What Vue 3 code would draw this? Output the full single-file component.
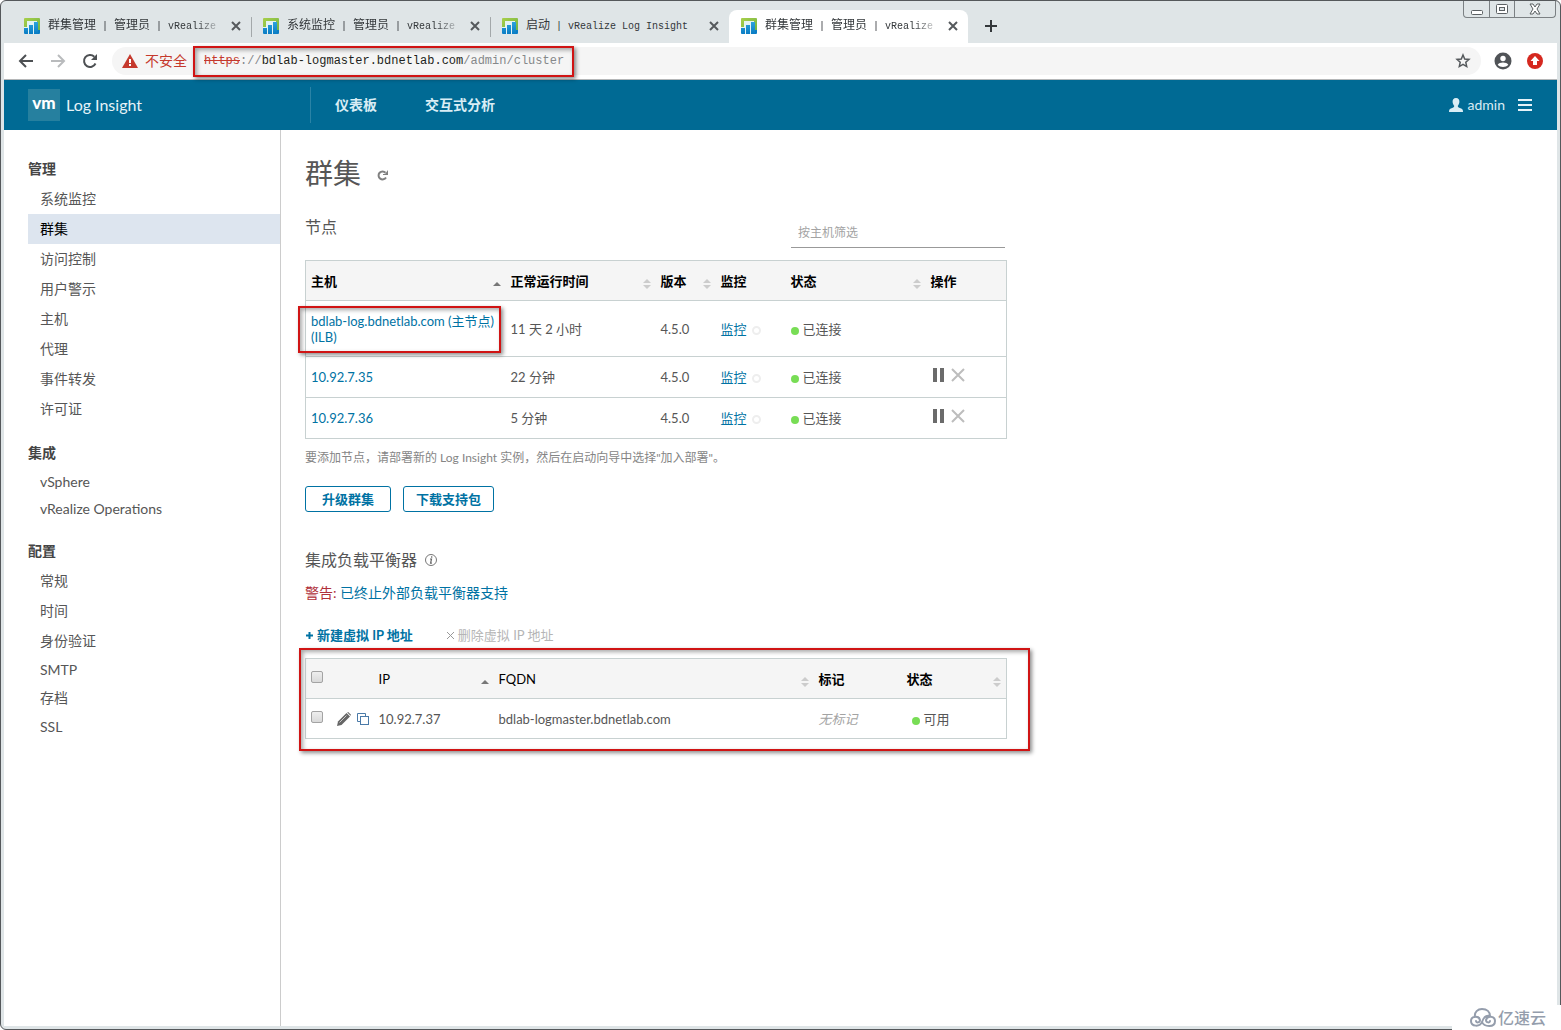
<script setup>
import { ref } from 'vue'

const tabs = [
  { parts: ['群集管理', '管理员'], product: 'vRealize' },
  { parts: ['系统监控', '管理员'], product: 'vRealize' },
  { parts: ['启动'], product: 'vRealize Log Insight', full: true },
  { parts: ['群集管理', '管理员'], product: 'vRealize', active: true }
]

const menu = [
  { title: '管理', items: ['系统监控', '群集', '访问控制', '用户警示', '主机', '代理', '事件转发', '许可证'] },
  { title: '集成', items: ['vSphere', 'vRealize Operations'] },
  { title: '配置', items: ['常规', '时间', '身份验证', 'SMTP', '存档', 'SSL'] }
]
const current = '群集'
const isLatin = (s) => /^[A-Za-z ]+$/.test(s)

const nodes = [
  { host: 'bdlab-log.bdnetlab.com (主节点) (ILB)', uptime: '11 天 2 小时', version: '4.5.0', master: true },
  { host: '10.92.7.35', uptime: '22 分钟', version: '4.5.0' },
  { host: '10.92.7.36', uptime: '5 分钟', version: '4.5.0' }
]

const filter = ref('')
</script>

<template>
  <div class="window">
    <div class="tabstrip">
      <div v-for="(t, i) in tabs" :key="i" class="tab" :class="{ active: t.active }">
        <svg class="favicon" width="16" height="16" viewBox="0 0 16 16" aria-hidden="true">
          <defs>
            <linearGradient id="leaf" x1="0" y1="0" x2="1" y2="1"><stop offset="0" stop-color="#a9cf4a" /><stop offset="1" stop-color="#6fb344" /></linearGradient>
            <linearGradient id="bar" x1="0" y1="0" x2="0" y2="1"><stop offset="0" stop-color="#2ba3dc" /><stop offset="1" stop-color="#0a7cc4" /></linearGradient>
          </defs>
          <path d="M1 0h14q1 0 1 1v12H0V1q0-1 1-1z" fill="url(#leaf)" />
          <path d="M3 3h10v13H0V9h3z" fill="#e3f3f4" />
          <path d="M0 10h4v6H1q-1 0-1-1zM5 7h4v9H5zM10 4h4v12h-4z" fill="url(#bar)" />
          <path d="M14 12h2v3q0 1-1 1h-1z" fill="#0a7cc4" />
        </svg>
        <span class="tab-title" :class="{ fade: !t.full }">
          <template v-for="p in t.parts" :key="p">{{ p }}<span class="mono"> | </span></template><span class="mono">{{ t.product }}</span>
        </span>
        <button class="plain tab-close" aria-label="关闭标签页">
          <svg width="10" height="10" viewBox="0 0 10 10"><path d="M1 1l8 8M9 1l-8 8" stroke="#55595c" stroke-width="2" /></svg>
        </button>
      </div>
      <button class="plain new-tab" aria-label="新标签页">
        <svg width="12" height="12" viewBox="0 0 12 12"><path d="M6 0v12M0 6h12" stroke="#33373a" stroke-width="2" /></svg>
      </button>
      <div class="win-controls">
        <button class="plain" aria-label="最小化">
          <svg width="14" height="12" viewBox="0 0 14 12"><rect x="1.500" y="7.500" width="11" height="4" rx="1" fill="#fff" stroke="#5b6063" /></svg>
        </button>
        <button class="plain" aria-label="最大化">
          <svg width="14" height="12" viewBox="0 0 14 12"><rect x="1.500" y="1.500" width="11" height="9" rx="1" fill="#fff" stroke="#5b6063" /><rect x="4.500" y="4.500" width="5" height="3" fill="#dfe5e7" stroke="#5b6063" /></svg>
        </button>
        <button class="plain wide" aria-label="关闭">
          <svg width="14" height="12" viewBox="0 0 14 12"><path d="M2 1h3l2 3 2-3h3L9 6l3 5H9L7 8l-2 3H2l3-5z" fill="#fff" stroke="#5b6063" /></svg>
        </button>
      </div>
    </div>

    <div class="toolbar">
      <button class="plain tool" aria-label="后退">
        <svg width="16" height="16" viewBox="0 0 16 16"><path d="M15 8H2M8 2L2 8l6 6" fill="none" stroke="#4d5053" stroke-width="2" /></svg>
      </button>
      <button class="plain tool" aria-label="前进">
        <svg width="16" height="16" viewBox="0 0 16 16"><path d="M1 8h13M8 2l6 6-6 6" fill="none" stroke="#b9bbbd" stroke-width="2" /></svg>
      </button>
      <button class="plain tool" aria-label="重新加载">
        <svg width="16" height="16" viewBox="0 0 16 16"><path d="M13.500 10.500A6 6 0 1 1 12.300 3.700" fill="none" stroke="#4d5053" stroke-width="2" /><path d="M15 1v6H9z" fill="#4d5053" /></svg>
      </button>
      <div class="omnibox">
        <svg width="16" height="14" viewBox="0 0 16 14" aria-hidden="true"><path d="M8 0l8 14H0z" fill="#c5392d" /><path d="M7 5h2v4H7zM7 10h2v2H7z" fill="#fff" /></svg>
        <span class="insecure">不安全</span>
        <span class="url"><s>https</s><span>://</span><b>bdlab-logmaster.bdnetlab.com</b><span>/admin/cluster</span><i class="mark mark-url"></i></span>
        <button class="plain star" aria-label="收藏">
          <svg width="16" height="16" viewBox="0 0 16 16"><path d="M8 2l1.700 4 4.300.4-3.200 2.900.9 4.300L8 11.400l-3.700 2.200.9-4.300L2 6.400 6.300 6z" fill="none" stroke="#55595c" stroke-width="1.500" /></svg>
        </button>
      </div>
      <button class="plain round" aria-label="用户">
        <svg width="18" height="18" viewBox="0 0 18 18"><circle cx="9" cy="9" r="8.500" fill="#505357" /><circle cx="9" cy="6.500" r="2.700" fill="#fff" /><path d="M3.700 12.700c1.500-3 9.100-3 10.600 0-2.500 3-8.100 3-10.600 0z" fill="#fff" /></svg>
      </button>
      <button class="plain round" aria-label="更新">
        <svg width="16" height="16" viewBox="0 0 16 16"><circle cx="8" cy="8" r="8" fill="#d5281f" /><path d="M8 3l4.500 5H10v4H6V8H3.500z" fill="#fff" /></svg>
      </button>
    </div>

    <header class="appbar">
      <span class="vm">vm</span>
      <span class="product">Log Insight</span>
      <nav class="topnav">
        <a href="#">仪表板</a>
        <a href="#">交互式分析</a>
      </nav>
      <a href="#" class="user">
        <svg width="14" height="14" viewBox="0 0 14 14" aria-hidden="true"><path d="M7 0c2.500 0 3.600 1.700 3.400 4C10.200 6 9.400 7 8.800 7.800c0 1.500.6 1.700 2.700 2.400C13.500 11 14 11.700 14 14H0c0-2.300.5-3 2.500-3.800 2.100-.7 2.700-.9 2.700-2.400C4.600 7 3.800 6 3.600 4 3.400 1.700 4.500 0 7 0z" fill="#d9edf5" /></svg>
        admin
      </a>
      <button class="plain burger" aria-label="菜单">
        <svg width="14" height="12" viewBox="0 0 14 12"><path d="M0 1h14M0 6h14M0 11h14" stroke="#e6f3f8" stroke-width="2" /></svg>
      </button>
    </header>

    <div class="body">
      <nav class="sidebar">
        <section v-for="g in menu" :key="g.title">
          <h3>{{ g.title }}</h3>
          <a v-for="m in g.items" :key="m" href="#" :class="{ latin: isLatin(m), current: m === current }">{{ m }}</a>
        </section>
      </nav>

      <main class="main">
        <div class="title">
          <h1>群集</h1>
          <button class="plain" aria-label="刷新">
            <svg width="12" height="12" viewBox="0 0 12 12"><path d="M9 8.500A4 4 0 1 1 8.500 3.700" fill="none" stroke="#808080" stroke-width="2" /><path d="M11 1v5H6V5h2z" fill="#808080" /></svg>
          </button>
        </div>

        <div class="section-head">
          <h2>节点</h2>
          <input v-model="filter" type="text" placeholder="按主机筛选" aria-label="按主机筛选" />
        </div>

        <table class="nodes">
          <colgroup><col class="w200" /><col class="w150" /><col class="w60" /><col class="w70" /><col class="w140" /><col /></colgroup>
          <thead>
            <tr>
              <th>主机<i class="sort asc"></i></th>
              <th>正常运行时间<i class="sort"></i></th>
              <th>版本<i class="sort"></i></th>
              <th>监控</th>
              <th>状态<i class="sort"></i></th>
              <th>操作</th>
            </tr>
          </thead>
          <tbody>
            <tr v-for="n in nodes" :key="n.host" :class="{ tall: n.master }">
              <td><a href="#">{{ n.host }}</a><i v-if="n.master" class="mark mark-host"></i></td>
              <td>{{ n.uptime }}</td>
              <td>{{ n.version }}</td>
              <td><a href="#">监控</a><i class="ring"></i></td>
              <td><i class="dot"></i>已连接</td>
              <td>
                <span v-if="!n.master" class="actions">
                  <button class="plain" aria-label="暂停"><svg width="12" height="14" viewBox="0 0 12 14"><path d="M0 0h4v14H0zM7 0h4v14H7z" fill="#6b6b6b" /></svg></button>
                  <button class="plain" aria-label="移除"><svg width="14" height="14" viewBox="0 0 14 14"><path d="M1 1l12 12M13 1L1 13" stroke="#bdbdbd" stroke-width="2" /></svg></button>
                </span>
              </td>
            </tr>
          </tbody>
        </table>

        <p class="note">要添加节点，请部署新的 Log Insight 实例，然后在启动向导中选择"加入部署"。</p>

        <div class="buttons">
          <button class="outline">升级群集</button>
          <button class="outline">下载支持包</button>
        </div>

        <div class="ilb-head">
          <h2>集成负载平衡器</h2>
          <svg width="12" height="12" viewBox="0 0 12 12" role="img" aria-label="信息"><circle cx="6" cy="6" r="5.500" fill="none" stroke="#777" /><path d="M6.700 2.300v1.400M5 5h1.500l-.9 4.200h1.300" fill="none" stroke="#666" stroke-width="1.200" /></svg>
        </div>
        <p class="warning"><span>警告:</span> <a href="#">已终止外部负载平衡器支持</a></p>

        <div class="vip-actions">
          <button class="plain add"><svg width="7" height="7" viewBox="0 0 7 7" aria-hidden="true"><path d="M3.500 0v7M0 3.500h7" stroke="#0072a3" stroke-width="2" /></svg>新建虚拟 IP 地址</button>
          <button class="plain del" disabled><svg width="7" height="7" viewBox="0 0 7 7" aria-hidden="true"><path d="M0 0l7 7M7 0L0 7" stroke="#999" stroke-width="1" /></svg>删除虚拟 IP 地址</button>
        </div>

        <div class="vip-wrap">
          <table>
            <colgroup><col class="w26" /><col class="w42" /><col class="w120" /><col class="w320" /><col class="w88" /><col /></colgroup>
            <thead>
              <tr>
                <th><input type="checkbox" aria-label="全选" /></th>
                <th></th>
                <th class="light">IP<i class="sort asc"></i></th>
                <th class="light">FQDN<i class="sort"></i></th>
                <th>标记</th>
                <th>状态<i class="sort"></i></th>
              </tr>
            </thead>
            <tbody>
              <tr>
                <td><input type="checkbox" aria-label="选择 10.92.7.37" /></td>
                <td>
                  <span class="edit">
                    <button class="plain" aria-label="编辑"><svg width="14" height="14" viewBox="0 0 14 14"><path d="M0 14l1-4.500L9.500 1l3.500 3.500L4.500 13z" fill="#666" /><path d="M10.200.5l1-.5 2.800 2.800-.5 1z" fill="#666" /><path d="M2.500 10.500l7-7" stroke="#c8c8c8" /></svg></button>
                    <button class="plain" aria-label="复制"><svg width="12" height="12" viewBox="0 0 12 12"><path d="M8.500 3V.5h-8v8H3" fill="none" stroke="#4a7aa8" /><rect x="3.500" y="3.500" width="8" height="8" fill="#fff" stroke="#4a7aa8" /></svg></button>
                  </span>
                </td>
                <td>10.92.7.37</td>
                <td>bdlab-logmaster.bdnetlab.com</td>
                <td><em>无标记</em></td>
                <td class="vip-state"><i class="dot"></i>可用</td>
              </tr>
            </tbody>
          </table>
          <i class="mark mark-vip"></i>
        </div>
      </main>
    </div>

    <div class="brand">
      <svg width="26" height="20" viewBox="0 0 26 20" aria-hidden="true">
        <path d="M5 9C4 4 8 1 12 1c5 0 8 3 8 7-5-1-7 3-8 6-2 5-11 5-11-1 0-5 8-6 9-1 0 3-4 3-4 1M12 14c2 5 13 6 13-1 0-5-8-6-9-1 0 3 4 3 4 1" fill="none" stroke="#949dac" stroke-width="2" stroke-linecap="round" />
      </svg>
      <span>亿速云</span>
    </div>
  </div>
</template>

<style>
body {
  margin: 0;
  background: #fff;
}
</style>

<style scoped>
* {
  box-sizing: border-box;
}

.window {
  position: relative;
  display: flex;
  flex-direction: column;
  min-height: 100vh;
  padding: 0 3px 3px;
  border: 1px solid #55585b;
  border-radius: 6px;
  background: #dfe5e7;
  color: #565656;
  font: 13px/20px Lato, "Noto Sans CJK SC", sans-serif;
}

a {
  color: #0072a3;
  text-decoration: none;
}

h1,
h2,
h3,
p {
  margin: 0;
  font-weight: 400;
}

.plain {
  display: flex;
  align-items: center;
  justify-content: center;
  padding: 0;
  border: 0;
  background: none;
  font: inherit;
  color: inherit;
}

/* browser chrome */
.tabstrip {
  display: flex;
  height: 42px;
  padding: 9px 0 0 8px;
}

.tab {
  display: flex;
  align-items: center;
  width: 239px;
  height: 33px;
  padding: 0 10px 2px 12px;
  border-radius: 8px 8px 0 0;
  color: #33373a;
  font-size: 12px;
}

.tab.active {
  background: #fff;
}

.tab:not(.active) + .tab:not(.active) {
  background: linear-gradient(#a3a8aa, #a3a8aa) left center / 1px 20px no-repeat;
}

.favicon {
  flex: none;
  margin-right: 8px;
}

.tab-title {
  flex: 1;
  white-space: nowrap;
}

.tab-title.fade {
  -webkit-mask-image: linear-gradient(to right, #000 88%, transparent 104%);
  mask-image: linear-gradient(to right, #000 88%, transparent 104%);
}

.tab-close {
  flex: none;
  width: 10px;
  margin-left: 14px;
}

.mono {
  font-family: "Liberation Mono", monospace;
  font-size: 10px;
  white-space: pre;
}

.new-tab {
  width: 28px;
  height: 31px;
  margin-left: 9px;
}

.win-controls {
  display: flex;
  height: 17px;
  margin: -9px 1px 0 auto;
  border: 1px solid #7b8083;
  border-top: 0;
  border-radius: 0 0 4px 4px;
}

.win-controls button {
  width: 25px;
}

.win-controls button + button {
  border-left: 1px solid #7b8083;
}

.win-controls .wide {
  width: 41px;
}

.toolbar {
  display: flex;
  align-items: center;
  height: 37px;
  padding: 0 12px 0 6px;
  border-bottom: 1px solid #b5b7b8;
  background: #fff;
}

.tool {
  width: 32px;
  height: 28px;
}

.omnibox {
  display: flex;
  flex: 1;
  align-items: center;
  height: 28px;
  margin: 0 12px 0 6px;
  padding: 0 10px;
  border-radius: 14px;
  background: #f5f5f5;
}

.insecure {
  margin: 0 17px 0 7px;
  color: #c5392d;
  font-size: 14px;
}

.url {
  position: relative;
  color: #85888a;
  font: 12px/28px "Liberation Mono", monospace;
}

.url s {
  color: #c5392d;
}

.url b {
  color: #1d1f20;
  font-weight: 400;
}

.star {
  margin-left: auto;
}

.round {
  width: 20px;
}

.round + .round {
  margin-left: 12px;
}

/* red highlight frames lie over the page */
.mark {
  position: absolute;
  border: 2px solid #d01414;
  box-shadow: 2px 2px 4px rgba(0, 0, 0, 0.45), inset 2px 2px 4px rgba(0, 0, 0, 0.35);
  pointer-events: none;
}

.mark-url {
  top: -1px;
  left: -11px;
  width: 381px;
  height: 31px;
}

.mark-host {
  top: 5px;
  left: -8px;
  width: 203px;
  height: 47px;
}

.mark-vip {
  inset: -10px -23px -12px -6px;
}

/* application header */
.appbar {
  display: flex;
  align-items: center;
  height: 50px;
  padding: 0 25px 0 24px;
  background: #006a94;
  color: #d9edf5;
}

.vm {
  width: 32px;
  height: 32px;
  margin-right: 6px;
  background: #26809f;
  color: #fff;
  font: 900 17px/28px Lato, sans-serif;
  text-align: center;
}

.product {
  width: 244px;
  color: #e6f3f8;
  font-size: 16px;
}

.topnav {
  display: flex;
  gap: 48px;
  padding-left: 24px;
  border-left: 1px solid #2a83a6;
  line-height: 36px;
}

.topnav a {
  color: #d9edf5;
  font-size: 14px;
  font-weight: 700;
}

.user {
  display: flex;
  align-items: center;
  gap: 5px;
  margin-left: auto;
  color: #d9edf5;
  font-size: 14px;
}

.burger {
  margin-left: 13px;
}

.body {
  display: flex;
  flex: 1;
  background: #fff;
}

.sidebar {
  flex: none;
  width: 277px;
  padding: 24px 0 24px 24px;
  border-right: 1px solid #ccc;
  font-size: 14px;
}

.sidebar section + section {
  margin-top: 14px;
}

.sidebar h3 {
  color: #454545;
  font-size: 14px;
  font-weight: 700;
  line-height: 30px;
}

.sidebar a {
  display: block;
  padding-left: 12px;
  color: #565656;
  line-height: 30px;
}

.sidebar a.latin {
  line-height: 27px;
}

.sidebar a.current {
  background: #dde5ef;
  color: #000;
}

.main {
  flex: 1;
  min-width: 0;
  max-width: 726px;
  padding: 23px 0 24px 24px;
}

.title {
  display: flex;
  align-items: center;
  gap: 16px;
}

h1 {
  font-size: 28px;
  line-height: 40px;
}

.title button {
  padding-top: 4px;
}

h2 {
  font-size: 16px;
  line-height: 30px;
}

.section-head {
  display: flex;
  justify-content: space-between;
  height: 36px;
  margin-top: 19px;
  padding-right: 2px;
}

.section-head input {
  align-self: flex-end;
  width: 214px;
  height: 32px;
  padding: 2px 7px 0;
  border: 0;
  border-bottom: 1px solid #999;
  background: none;
  font: 12px/20px Lato, "Noto Sans CJK SC", sans-serif;
}

.section-head input::placeholder {
  color: #a3a3a3;
}

table {
  width: 100%;
  border: 1px solid #c8d1d1;
  border-collapse: collapse;
  table-layout: fixed;
}

.nodes {
  margin-top: 12px;
}

.w26 { width: 26px; }
.w42 { width: 42px; }
.w60 { width: 60px; }
.w70 { width: 70px; }
.w88 { width: 88px; }
.w120 { width: 120px; }
.w140 { width: 140px; }
.w150 { width: 150px; }
.w200 { width: 200px; }
.w320 { width: 320px; }

tr {
  height: 41px;
  border-bottom: 1px solid #c8d1d1;
}

thead tr {
  height: 40px;
  background: #f5f5f5;
}

.vip-wrap tr {
  height: 40px;
}

tr.tall {
  height: 56px;
}

th,
td {
  position: relative;
  padding: 0 5px;
  text-align: left;
  line-height: 16px;
}

th {
  color: #000;
  font-weight: 700;
}

th.light {
  font-weight: 400;
}

.sort {
  position: absolute;
  top: 18px;
  right: 5px;
  width: 8px;
  height: 10px;
}

.sort::before,
.sort::after {
  content: "";
  position: absolute;
  left: 0;
  border: 4px solid transparent;
}

.sort::before {
  top: -4px;
  border-bottom-color: #ccc;
}

.sort::after {
  top: 6px;
  border-top-color: #ccc;
}

.sort.asc::before {
  top: -1px;
  border-bottom-color: #777;
}

.sort.asc::after {
  display: none;
}

.ring {
  display: inline-block;
  width: 9px;
  height: 9px;
  margin-left: 5px;
  border: 2px solid #eee;
  border-radius: 50%;
  vertical-align: -1px;
}

.dot {
  display: inline-block;
  width: 8px;
  height: 8px;
  margin-right: 4px;
  border-radius: 50%;
  background: #78dd55;
  vertical-align: -1px;
}

.vip-state {
  padding-left: 10px;
}

.actions,
.edit {
  display: flex;
  align-items: center;
  gap: 6px;
}

.actions {
  padding: 0 0 4px 2px;
}

em {
  color: #a3a3a3;
}

input[type="checkbox"] {
  appearance: none;
  display: block;
  width: 12px;
  height: 12px;
  margin: 0 0 4px;
  border: 1px solid #a3a3a3;
  border-radius: 2px;
  background: linear-gradient(#eee, #d9d9d9);
}

.note {
  margin-top: 9px;
  color: #858585;
  font-size: 12px;
}

.buttons {
  display: flex;
  gap: 12px;
  margin-top: 18px;
}

.outline {
  height: 26px;
  padding: 0 12px;
  border: 1px solid #0072a3;
  border-radius: 3px;
  background: #fff;
  color: #0072a3;
  font: 700 13px/20px Lato, "Noto Sans CJK SC", sans-serif;
}

.outline:first-child {
  padding: 0 16px;
}

.ilb-head {
  display: flex;
  align-items: center;
  gap: 8px;
  margin-top: 33px;
}

.warning {
  margin-top: 8px;
  font-size: 14px;
}

.warning span {
  color: #b0303a;
}

.vip-actions {
  display: flex;
  gap: 34px;
  margin: 22px 0 13px;
  padding-left: 1px;
}

.vip-actions button {
  gap: 4px;
}

.add {
  color: #0072a3;
  font-weight: 700;
}

.del {
  color: #b5b5b5;
}

.vip-wrap {
  position: relative;
}

/* site brand covers the window corner */
.brand {
  position: absolute;
  right: -1px;
  bottom: -1px;
  display: flex;
  align-items: center;
  gap: 2px;
  width: 109px;
  height: 25px;
  padding-left: 18px;
  background: #fff;
  color: #949dac;
  font-size: 16px;
  font-weight: 500;
}
</style>
